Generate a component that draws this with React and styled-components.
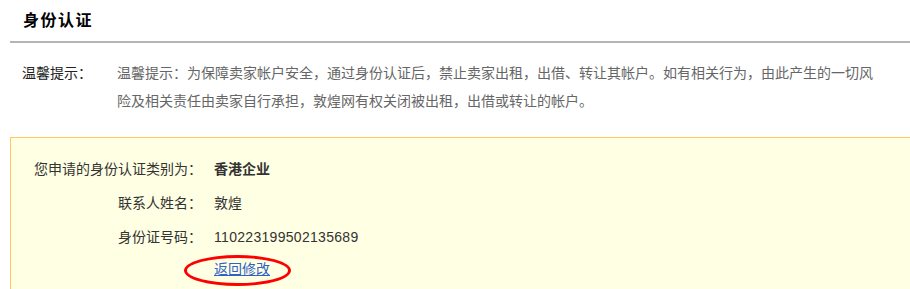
import React from 'react'
import styled, { createGlobalStyle } from 'styled-components'

const GlobalStyle = createGlobalStyle`
    body {
        margin: 0;
        background: #fff;
        font-family: "Liberation Sans", "Noto Sans CJK SC", sans-serif;
        font-size: 14px;
        color: #333;
    }
`;

const info = [
    { label: '您申请的身份认证类别为：', value: '香港企业', strong: true },
    { label: '联系人姓名：', value: '敦煌' },
    { label: '身份证号码：', value: '110223199502135689', digits: true },
];

function App() {
    return (
        <Page>
            <GlobalStyle />
            <Title>身份认证</Title>
            <Tips>
                <TipLabel>温馨提示：</TipLabel>
                <TipText>
                    温馨提示：为保障卖家帐户安全，通过身份认证后，禁止卖家出租，出借、转让其帐户。如有相关行为，由此产生的一切风险及相关责任由卖家自行承担，敦煌网有权关闭被出租，出借或转让的帐户。
                </TipText>
            </Tips>
            <InfoBox>
                {info.map((row) => (
                    <Row key={row.label}>
                        <Label>{row.label}</Label>
                        <Value $strong={row.strong} $digits={row.digits}>{row.value}</Value>
                    </Row>
                ))}
                <Row>
                    <Label />
                    <Value>
                        <Marked>
                            <EditLink href="#">返回修改</EditLink>
                        </Marked>
                    </Value>
                </Row>
            </InfoBox>
        </Page>
    )
}

const Page = styled.div`
    padding-left: 10px;
    height: 289px;
    overflow: hidden;
`;

const Title = styled.h2`
    margin: 0;
    height: 41px;
    line-height: 41px;
    padding-left: 13px;
    font-size: 16px;
    font-weight: bold;
    letter-spacing: 1.5px;
    color: #000;
    border-bottom: 2px solid #b5b5b5;
`;

const Tips = styled.div`
    display: flex;
    padding: 16px 0 0 12px;
    line-height: 28px;
`;

const TipLabel = styled.div`
    width: 95px;
    flex-shrink: 0;
    color: #222;
`;

const TipText = styled.p`
    margin: 0;
    width: 762px;
    color: #666;
`;

const InfoBox = styled.div`
    margin-top: 22px;
    padding-top: 14px;
    min-height: 160px;
    background: #ffffe4;
    border-top: 1px solid #ffc865;
    border-left: 1px solid #ffc865;
`;

const Row = styled.div`
    display: grid;
    grid-template-columns: 191px 1fr;
    column-gap: 12px;
    height: 34px;
    line-height: 34px;
`;

const Label = styled.div`
    text-align: right;
    color: #333;
`;

const Value = styled.div`
    color: #333;
    font-weight: ${(p) => (p.$strong ? 'bold' : 'normal')};
    letter-spacing: ${(p) => (p.$digits ? '0.3px' : 'normal')};
`;

const Marked = styled.span`
    position: relative;
    display: inline-block;
    line-height: 18px;
    top: -2px;

    &::after {
        content: '';
        position: absolute;
        left: -30px;
        top: -5px;
        width: 101px;
        height: 25px;
        border: 3px solid #f00;
        border-radius: 50%;
    }
`;

const EditLink = styled.a`
    color: #2f62c9;
    text-decoration: underline;
`;

export default App
